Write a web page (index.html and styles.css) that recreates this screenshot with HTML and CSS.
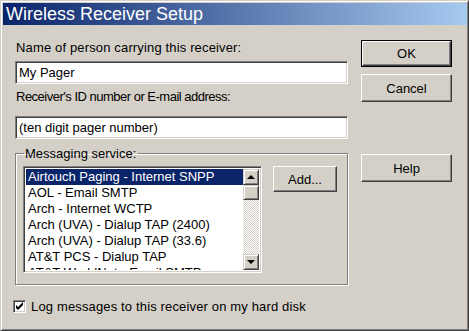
FILE: index.html
```html
<!DOCTYPE html>
<html lang="en">
<head>
    <meta charset="UTF-8">
    <title>Wireless Receiver Setup</title>
    <link rel="stylesheet" href="styles.css">
</head>
<body>
    <div class="window">
        <div class="title-bar">Wireless Receiver Setup</div>

        <div class="dialog">
            <div class="left-col">
                <label class="field-label" for="name">Name of person carrying this receiver:</label>
                <input class="text-field" type="text" id="name" value="My Pager">

                <label class="field-label second" for="receiver-id">Receiver's ID number or E-mail address:</label>
                <input class="text-field" type="text" id="receiver-id" value="(ten digit pager number)">

                <fieldset class="group">
                    <legend>Messaging service:</legend>
                    <div class="group-body">
                        <div class="listbox">
                            <ul class="items">
                                <li class="selected">Airtouch Paging - Internet SNPP</li>
                                <li>AOL - Email SMTP</li>
                                <li>Arch - Internet WCTP</li>
                                <li>Arch (UVA) - Dialup TAP (2400)</li>
                                <li>Arch (UVA) - Dialup TAP (33.6)</li>
                                <li>AT&amp;T PCS - Dialup TAP</li>
                                <li>AT&amp;T WorldNet - Email SMTP</li>
                            </ul>
                            <div class="scrollbar">
                                <div class="scroll-btn"><span class="arrow-up"></span></div>
                                <div class="thumb"></div>
                                <div class="track"></div>
                                <div class="scroll-btn"><span class="arrow-down"></span></div>
                            </div>
                        </div>
                        <button class="btn add-btn" type="button">Add...</button>
                    </div>
                </fieldset>
            </div>

            <div class="right-col">
                <div class="default-frame"><button class="btn" type="button">OK</button></div>
                <button class="btn cancel-btn" type="button">Cancel</button>
                <button class="btn help-btn" type="button">Help</button>
            </div>
        </div>

        <label class="check-row">
            <span class="checkbox">
                <svg width="9" height="9" viewBox="0 0 9 9"><path d="M1 3v3l2 2 5-5V0L3 5z" fill="#000"/></svg>
            </span>
            Log messages to this receiver on my hard disk
        </label>
    </div>
</body>
</html>
```

FILE: styles.css
```css
body {
    margin: 0;
    font-family: "Liberation Sans", Arial, sans-serif;
    font-size: 13px;
    color: #000;
}
.window {
    width: 469px;
    height: 331px;
    box-sizing: border-box;
    background-color: #d4d0c8;
    border: 1px solid;
    border-color: #d4d0c8 #404040 #404040 #d4d0c8;
    box-shadow: inset 1px 1px #fff, inset -1px -1px #808080;
    padding: 2px 1px 0 2px;
}
.title-bar {
    height: 22px;
    line-height: 22px;
    padding-left: 3px;
    color: #fff;
    font-size: 18px;
    background: linear-gradient(to right, #0a246a, #a6caf0);
}
.dialog {
    display: flex;
    padding-left: 12px;
}
.left-col {
    width: 333px;
    display: flex;
    flex-direction: column;
}
.field-label {
    display: block;
    line-height: 15px;
    margin-top: 15px;
    margin-left: 1px;
    height: 21px;
    letter-spacing: 0.15px;
}
.field-label.second {
    margin-top: 5px;
    height: 27px;
    letter-spacing: -0.5px;
}
.text-field {
    box-sizing: border-box;
    width: 333px;
    height: 23px;
    margin: 0;
    padding: 0 3px;
    font: inherit;
    border: 1px solid;
    border-color: #808080 #fff #fff #808080;
    box-shadow: inset 1px 1px #404040, inset -1px -1px #d4d0c8;
    background-color: #fff;
    outline: none;
}
.group {
    margin: 7px 0 0;
    padding: 0;
    height: 139px;
    box-sizing: border-box;
    border: 1px solid #808080;
    box-shadow: inset 1px 1px #fff, 1px 1px #fff;
}
.group legend {
    margin-left: 8px;
    padding: 0 2px 0 1px;
    line-height: 15px;
}
.group-body {
    display: flex;
    align-items: flex-start;
    padding: 5px 0 0 7px;
}
.listbox {
    display: flex;
    width: 239px;
    height: 107px;
    box-sizing: border-box;
    border: 1px solid;
    border-color: #808080 #fff #fff #808080;
    box-shadow: inset 1px 1px #404040, inset -1px -1px #d4d0c8;
    padding: 2px;
    background-color: #fff;
    overflow: hidden;
}
.items {
    list-style: none;
    margin: 0;
    padding: 0;
    flex: 1;
    overflow: hidden;
}
.items li {
    height: 16px;
    line-height: 16px;
    padding-left: 2px;
    white-space: nowrap;
}
.items li.selected {
    background-color: #0a246a;
    color: #fff;
}
.scrollbar {
    width: 16px;
    display: flex;
    flex-direction: column;
}
.scroll-btn,
.thumb {
    height: 16px;
    box-sizing: border-box;
    background-color: #d4d0c8;
    border: 1px solid;
    border-color: #d4d0c8 #404040 #404040 #d4d0c8;
    box-shadow: inset 1px 1px #fff, inset -1px -1px #808080;
    display: flex;
    align-items: center;
    justify-content: center;
}
.thumb {
    height: 15px;
}
.track {
    flex: 1;
    background: repeating-conic-gradient(#d4d0c8 0 25%, #fff 0 50%) 0 0 / 2px 2px;
}
.arrow-up {
    border: 4px solid transparent;
    border-bottom: 4px solid #000;
    border-top: 0;
    margin-top: -1px;
}
.arrow-down {
    border: 4px solid transparent;
    border-top: 4px solid #000;
    border-bottom: 0;
}
.btn {
    font: inherit;
    color: #000;
    background-color: #d4d0c8;
    border: 1px solid;
    border-color: #fff #404040 #404040 #fff;
    box-shadow: inset -1px -1px #808080;
    padding: 0;
    margin: 0;
}
.add-btn {
    width: 64px;
    height: 26px;
    margin-left: 11px;
}
.right-col {
    display: flex;
    flex-direction: column;
    margin-left: 13px;
    padding-top: 15px;
}
.default-frame {
    border: 1px solid #000;
    width: 91px;
    height: 27px;
    box-sizing: border-box;
}
.default-frame .btn {
    width: 89px;
    height: 25px;
}
.cancel-btn,
.help-btn {
    width: 91px;
    height: 28px;
}
.cancel-btn {
    margin-top: 7px;
}
.help-btn {
    margin-top: 52px;
}
.check-row {
    display: flex;
    align-items: center;
    margin: 14px 0 0 10px;
    line-height: 15px;
    letter-spacing: 0.15px;
}
.checkbox {
    width: 13px;
    height: 13px;
    box-sizing: border-box;
    border: 1px solid;
    border-color: #808080 #fff #fff #808080;
    box-shadow: inset 1px 1px #404040, inset -1px -1px #d4d0c8;
    background-color: #fff;
    display: flex;
    align-items: center;
    justify-content: center;
    margin-right: 5px;
}
```
